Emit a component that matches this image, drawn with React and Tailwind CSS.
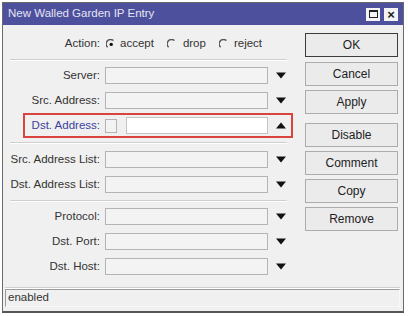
import React from 'react';

// Small drawings -------------------------------------------------
const ArrowDown = () => (
    <svg width="12" height="7" viewBox="0 0 12 7" className="shrink-0">
        <polygon points="1,0.5 11,0.5 6,6.5" fill="#111" />
    </svg>
);

const ArrowUp = () => (
    <svg width="12" height="7" viewBox="0 0 12 7" className="shrink-0">
        <polygon points="1,6.5 11,6.5 6,0.5" fill="#111" />
    </svg>
);

const Radio = ({ checked }) => (
    <svg width="10" height="11" viewBox="0 0 10 11" className="shrink-0">
        <path d="M7.5 1.6 A4.3 4.3 0 0 0 1.6 8.2" fill="none" stroke="#555" strokeWidth="1.4" />
        {checked && <circle cx="5.2" cy="5.4" r="1.7" fill="#111" />}
    </svg>
);

const Separator = ({ className }) => (
    <div className={`h-[2px] border-t border-[#cfcfcf] border-b border-b-white ${className}`} />
);

// Rows -----------------------------------------------------------
const FieldRow = ({ label, className = '' }) => (
    <div className={`flex items-center h-[17px] ${className}`}>
        <div className="w-[97px] text-right text-[#333] leading-none">{label}</div>
        <div className="ml-[5px] w-[163px] h-[17px] bg-[#f3f3f3] border border-[#b4b4b4]" />
        <div className="ml-[7px]"><ArrowDown /></div>
    </div>
);

const Button = ({ children, isDefault, className = '' }) => (
    <button
        className={`w-[93px] h-[24px] flex items-center justify-center text-[12px] text-[#222] bg-[#ebebeb] ${
            isDefault ? 'border border-[#3c3c3c]' : 'border border-[#acacac]'
        } ${className}`}
    >
        {children}
    </button>
);

export default function App() {
    return (
        <div className="w-[408px] h-[316px] bg-white pt-[2px] pl-[2px] font-['Liberation_Sans',Arial,sans-serif] text-[11.5px]">
            <div className="w-[402px] h-[311px] flex flex-col bg-[#f0f0f0] border border-[#6a6a6a] border-b-2 border-b-[#555]">
                {/* Title bar */}
                <div className="h-[22px] flex items-center justify-between bg-[#4d509c] pl-[5px] pr-[5px]">
                    <span className="text-[#e4e4f4] text-[11.5px]">New Walled Garden IP Entry</span>
                    <div className="flex items-center gap-[4px]">
                        <div className="w-[14px] h-[13px] bg-[#f4f4f4] flex items-center justify-center">
                            <div className="w-[9px] h-[8px] border border-[#222] border-t-2" />
                        </div>
                        <div className="w-[14px] h-[13px] bg-[#f4f4f4] flex items-center justify-center text-[#222] text-[13px] font-bold leading-none">
                            ×
                        </div>
                    </div>
                </div>

                {/* Body */}
                <div className="flex flex-1">
                    {/* Form column */}
                    <div className="w-[300px] flex flex-col">
                        {/* Action */}
                        <div className="flex items-center h-[18px] mt-[10px] text-[#333]">
                            <div className="w-[97px] text-right leading-none">Action:</div>
                            <div className="ml-[6px] flex items-center">
                                <Radio checked />
                                <span className="ml-[4px]">accept</span>
                                <span className="ml-[13px]"><Radio /></span>
                                <span className="ml-[6px]">drop</span>
                                <span className="ml-[13px]"><Radio /></span>
                                <span className="ml-[5px]">reject</span>
                            </div>
                        </div>

                        <Separator className="mt-[6px] ml-[7px] w-[277px]" />

                        <FieldRow label="Server:" className="mt-[6px]" />
                        <FieldRow label="Src. Address:" className="mt-[8px]" />

                        {/* Highlighted Dst. Address */}
                        <div className="mt-[4px] ml-[20px] w-[270px] h-[25px] border-2 border-[#d9443e] flex items-center">
                            <div className="w-[75px] text-right text-[#3b3f9e] leading-none">Dst. Address:</div>
                            <div className="ml-[5px] w-[12px] h-[14px] bg-[#f3f3f3] border border-[#b4b4b4]" />
                            <div className="ml-[9px] w-[142px] h-[17px] bg-white border border-[#c4c4c4]" />
                            <div className="ml-[7px]"><ArrowUp /></div>
                        </div>

                        <Separator className="mt-[4px] ml-[7px] w-[277px]" />

                        <FieldRow label="Src. Address List:" className="mt-[7px]" />
                        <FieldRow label="Dst. Address List:" className="mt-[8px]" />

                        <Separator className="mt-[7px] ml-[7px] w-[277px]" />

                        <FieldRow label="Protocol:" className="mt-[6px]" />
                        <FieldRow label="Dst. Port:" className="mt-[8px]" />
                        <FieldRow label="Dst. Host:" className="mt-[8px]" />
                    </div>

                    {/* Buttons column */}
                    <div className="flex flex-col pl-[2px] pt-[8px]">
                        <Button isDefault>OK</Button>
                        <Button className="mt-[5px]">Cancel</Button>
                        <Button className="mt-[4px]">Apply</Button>
                        <Button className="mt-[9px]">Disable</Button>
                        <Button className="mt-[4px]">Comment</Button>
                        <Button className="mt-[4px]">Copy</Button>
                        <Button className="mt-[4px]">Remove</Button>
                    </div>
                </div>

                <Separator className="ml-[2px] w-[395px]" />

                {/* Status */}
                <div className="mt-[0px] ml-[2px] mb-[4px] w-[395px] h-[18px] flex items-center pl-[2px] border-t border-l border-[#9a9a9a] border-b border-r border-b-[#f8f8f8] border-r-[#f8f8f8] text-[#333]">
                    enabled
                </div>
            </div>
        </div>
    );
}
